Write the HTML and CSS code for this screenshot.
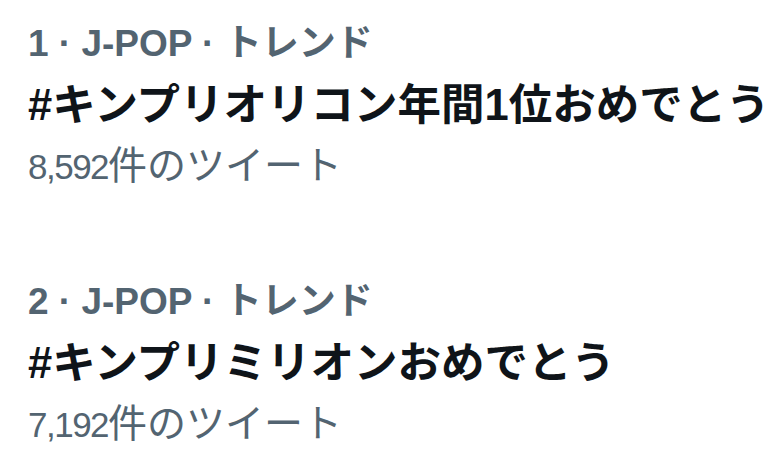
FILE: index.html
```html
<!DOCTYPE html>
<html lang="ja">
<head>
    <meta charset="UTF-8">
    <title>トレンド</title>
    <link rel="stylesheet" href="styles.css">
</head>
<body>
    <div class="trends">
        <div class="trend">
            <div class="meta">1 · J-POP · トレンド</div>
            <div class="title">#キンプリオリコン年間1位おめでとう</div>
            <div class="count"><span class="num">8,592</span>件のツイート</div>
        </div>
        <div class="trend">
            <div class="meta">2 · J-POP · トレンド</div>
            <div class="title">#キンプリミリオンおめでとう</div>
            <div class="count"><span class="num">7,192</span>件のツイート</div>
        </div>
    </div>
</body>
</html>
```

FILE: styles.css
```css
body {
    margin: 0;
    background-color: #ffffff;
    font-family: "Liberation Sans", "Noto Sans CJK JP", sans-serif;
}
.trends {
    display: flex;
    flex-direction: column;
    gap: 75px;
    padding: 14px 0 0 28px;
}
.trend {
    display: flex;
    flex-direction: column;
}
.meta {
    color: #536471;
    font-size: 37px;
    font-weight: bold;
    line-height: 60px;
}
.title {
    color: #0f1419;
    font-size: 43.5px;
    font-weight: bold;
    line-height: 62px;
    white-space: nowrap;
}
.count {
    color: #536471;
    font-size: 39px;
    line-height: 60px;
}
.num {
    font-size: 35px;
    letter-spacing: -1.5px;
}
```
